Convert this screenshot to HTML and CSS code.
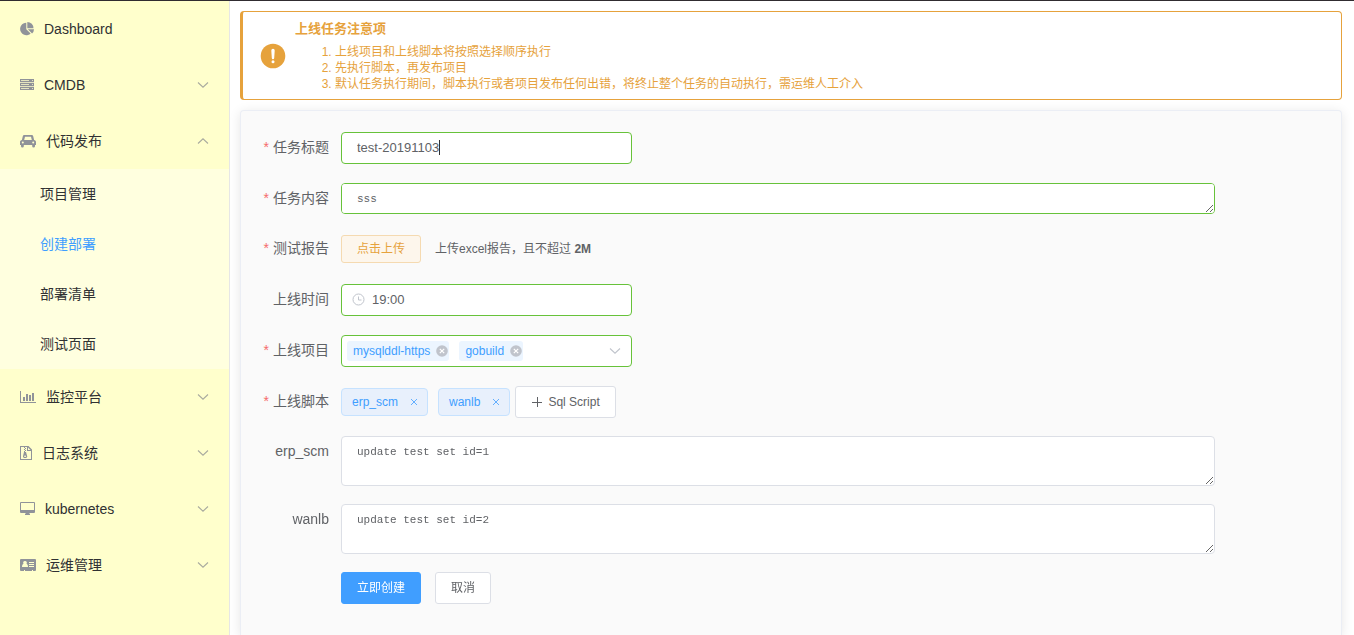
FILE: index.html
```
<!DOCTYPE html>
<html lang="zh-CN">
<head>
<meta charset="utf-8">
<title>创建部署</title>
<link rel="stylesheet" href="styles.css">
</head>
<body>
<svg class="sprite" aria-hidden="true">
  <symbol id="chevron" viewBox="0 0 12 12"><path d="M1 3.500 6 8.200l5-4.700" fill="none" stroke="currentColor" stroke-width="1.100"/></symbol>
  <symbol id="cross" viewBox="0 0 12 12"><path d="m3 3 6 6m0-6-6 6" fill="none" stroke="currentColor" stroke-width=".8"/></symbol>
  <symbol id="cross-circle" viewBox="0 0 12 12"><circle cx="6" cy="6" r="5.800" fill="#c0c4cc"/><path d="m3.800 3.800 4.400 4.400m0-4.400-4.400 4.400" fill="none" stroke="#fff" stroke-width="1.200"/></symbol>
</svg>
<div class="layout">
  <nav class="sidebar">
    <a class="menu-item" href="#">
      <svg class="menu-icon" width="14" height="14" viewBox="0 0 14 14"><path d="M6.300.8A6.200 6.200 0 1 0 10.600 11.500L6.300 7.200z"/><path d="M7.300 0v6.200h6.200A6.200 6.200 0 0 0 7.300 0z"/><path d="M7.800 7.200h6.200a6.200 6.200 0 0 1-1.900 4.300z"/></svg>
      <span>Dashboard</span>
    </a>
    <a class="menu-item" href="#">
      <svg class="menu-icon" width="14" height="14" viewBox="0 0 14 14"><path fill-rule="evenodd" d="M0 1h14v3H0zm1 1v1h8V2zm11 0v1h1V2zM0 5h14v3H0zm1 1v1h8V6zm11 0v1h1V6zM0 9h14v3H0zm1 1v1h8v-1zm11 0v1h1v-1z"/><path d="M0 1h14v11H0z" opacity=".25"/></svg>
      <span>CMDB</span>
      <svg class="menu-arrow"><use href="#chevron"/></svg>
    </a>
    <a class="menu-item" href="#">
      <svg class="menu-icon" width="16" height="14" viewBox="0 0 16 14"><path fill-rule="evenodd" d="M4.500 1h7c.9 0 1.500.5 1.700 1.200L14.100 6c1.200.2 1.900 1 1.900 2v3h-1v1.200a1.400 1.400 0 0 1-2.800 0V11H3.800v1.200a1.400 1.400 0 0 1-2.800 0V11H0V8c0-1 .7-1.800 1.900-2l.9-3.800C3 1.500 3.600 1 4.500 1zm.5 1.800L4.200 6h7.600L11 2.800zM2.800 7.500a1 1 0 1 0 0 2 1 1 0 0 0 0-2zm10.400 0a1 1 0 1 0 0 2 1 1 0 0 0 0-2z"/></svg>
      <span>代码发布</span>
      <svg class="menu-arrow menu-arrow--open"><use href="#chevron"/></svg>
    </a>
    <div class="submenu">
      <a class="submenu-item" href="#">项目管理</a>
      <a class="submenu-item submenu-item--active" href="#">创建部署</a>
      <a class="submenu-item" href="#">部署清单</a>
      <a class="submenu-item" href="#">测试页面</a>
    </div>
    <a class="menu-item" href="#">
      <svg class="menu-icon" width="16" height="14" viewBox="0 0 16 14"><path d="M0 1h1v11h15v1H0zM3 7h2v4H3zM6 4h2v7H6zM9 5h2v6H9zM12 3h2v8h-2z"/></svg>
      <span>监控平台</span>
      <svg class="menu-arrow"><use href="#chevron"/></svg>
    </a>
    <a class="menu-item" href="#">
      <svg class="menu-icon" width="12" height="14" viewBox="0 0 12 14"><path fill-rule="evenodd" d="M0 0h8.500L12 3.500V14H0zm1 1v12h10V5H7V1zm7 .5V4h2.500z"/><path d="M4 1h1v1H4zM5 2h1v1H5zM4 3h1v1H4zM5 4h1v1H5zM4 5h1v1H4z"/><path fill-rule="evenodd" d="M4 6h2l1.200 4.200c.3 1.100-.8 1.800-2.100 1.800S2.700 11.300 3 10.200zm1.100 3.500c-.7 0-1.100.3-1.100.7s.4.700 1.100.7 1.100-.3 1.100-.7-.4-.7-1.100-.7z"/></svg>
      <span>日志系统</span>
      <svg class="menu-arrow"><use href="#chevron"/></svg>
    </a>
    <a class="menu-item" href="#">
      <svg class="menu-icon" width="15" height="14" viewBox="0 0 15 14"><path fill-rule="evenodd" d="M1 0h13q1 0 1 1v9q0 1-1 1H9.500v1H10v1H5v-1h.5v-1H1q-1 0-1-1V1q0-1 1-1zm0 1v7h13V1z"/></svg>
      <span>kubernetes</span>
      <svg class="menu-arrow"><use href="#chevron"/></svg>
    </a>
    <a class="menu-item" href="#">
      <svg class="menu-icon" width="16" height="14" viewBox="0 0 16 14"><path fill-rule="evenodd" d="M1 1h14q1 0 1 1v10q0 1-1 1h-2v-1h-1v1H5v-1H4v1H1q-1 0-1-1V2q0-1 1-1zm4 2a1.700 1.700 0 0 0-1.500 2.700C2.400 6.200 2 7.500 2 9h6c0-1.500-.4-2.800-1.500-3.300A1.700 1.700 0 0 0 5 3zm4 1v1h5V4zm0 2v1h5V6zm0 2v1h5V8z"/></svg>
      <span>运维管理</span>
      <svg class="menu-arrow"><use href="#chevron"/></svg>
    </a>
  </nav>

  <main class="main">
    <section class="alert" role="alert">
      <svg class="alert-icon" viewBox="0 0 28 28"><circle cx="14" cy="14" r="12.300" fill="#e6a23c"/><path d="M12.300 8.500a1.700 1.700 0 0 1 3.400 0l-.5 7.500a1.200 1.200 0 0 1-2.400 0z" fill="#fff"/><circle cx="14" cy="19.800" r="1.500" fill="#fff"/></svg>
      <div class="alert-body">
        <h2 class="alert-title">上线任务注意项</h2>
        <ol class="alert-list">
          <li>上线项目和上线脚本将按照选择顺序执行</li>
          <li>先执行脚本，再发布项目</li>
          <li>默认任务执行期间，脚本执行或者项目发布任何出错，将终止整个任务的自动执行，需运维人工介入</li>
        </ol>
      </div>
    </section>

    <form class="card">
      <div class="row">
        <label class="label required" for="title">任务标题</label>
        <div class="control">
          <div class="field">
            <input class="input valid" id="title" type="text" value="test-20191103">
            <span class="caret"></span>
          </div>
        </div>
      </div>
      <div class="row row--tight">
        <label class="label required" for="content">任务内容</label>
        <div class="control"><textarea class="textarea textarea--single valid" id="content">sss</textarea></div>
      </div>
      <div class="row">
        <label class="label required" for="upload">测试报告</label>
        <div class="control control--spaced">
          <button class="button button--upload" id="upload" type="button">点击上传</button>
          <span class="hint">上传excel报告，且不超过 <b>2M</b></span>
        </div>
      </div>
      <div class="row">
        <label class="label" for="time">上线时间</label>
        <div class="control">
          <div class="field">
            <input class="input input--icon valid" id="time" type="text" value="19:00">
            <svg class="clock" viewBox="0 0 14 14"><path d="M6.500 3.500V7h3" fill="none" stroke="currentColor"/><circle cx="6.500" cy="6.500" r="5.500" fill="none" stroke="currentColor"/></svg>
          </div>
        </div>
      </div>
      <div class="row">
        <label class="label required" for="projects">上线项目</label>
        <div class="control">
          <div class="field select valid">
            <span class="chip">mysqlddl-https<button class="chip-close" type="button" aria-label="移除 mysqlddl-https"><svg class="glyph"><use href="#cross-circle"/></svg></button></span>
            <span class="chip">gobuild<button class="chip-close" type="button" aria-label="移除 gobuild"><svg class="glyph"><use href="#cross-circle"/></svg></button></span>
            <input class="select-input" id="projects" type="text" role="combobox" aria-expanded="false">
            <svg class="glyph select-arrow"><use href="#chevron"/></svg>
          </div>
        </div>
      </div>
      <div class="row row--tight">
        <label class="label required" for="add-script">上线脚本</label>
        <div class="control">
          <span class="tag">erp_scm<button class="tag-close" type="button" aria-label="移除 erp_scm"><svg class="glyph"><use href="#cross"/></svg></button></span>
          <span class="tag tag--last">wanlb<button class="tag-close" type="button" aria-label="移除 wanlb"><svg class="glyph"><use href="#cross"/></svg></button></span>
          <button class="button" id="add-script" type="button"><svg class="glyph" viewBox="0 0 12 12"><path d="M6.500 1v10M1 6.500h10" stroke="currentColor"/></svg>Sql Script</button>
        </div>
      </div>
      <div class="row">
        <label class="label" for="erp">erp_scm</label>
        <div class="control"><textarea class="textarea" id="erp">update test set id=1</textarea></div>
      </div>
      <div class="row">
        <label class="label" for="wanlb">wanlb</label>
        <div class="control"><textarea class="textarea" id="wanlb">update test set id=2</textarea></div>
      </div>
      <div class="row">
        <div class="label"></div>
        <div class="control control--spaced">
          <button class="button button--primary" type="submit">立即创建</button>
          <button class="button" type="button">取消</button>
        </div>
      </div>
    </form>
  </main>
</div>
</body>
</html>
```
FILE: styles.css
```
* {
  box-sizing: border-box;
}

body {
  margin: 0;
  background: #fff;
  color: #606266;
  font-family: "Liberation Sans", "Noto Sans CJK SC", sans-serif;
  font-size: 14px;
}

button,
input,
textarea {
  margin: 0;
  font-family: inherit;
  color: inherit;
  outline: none;
}

a {
  text-decoration: none;
}

.sprite {
  display: none;
}

.layout {
  display: flex;
  min-height: 100vh;
  border-top: 1px solid #302c30;
}

/* Sidebar */
.sidebar {
  flex: 0 0 230px;
  background: #ffffcc;
  border-right: 1px solid #e6e6e6;
}

.menu-item {
  display: flex;
  align-items: center;
  gap: 10px;
  height: 56px;
  padding: 0 20px;
  color: #303133;
  line-height: 20px;
}

.menu-icon {
  flex: none;
  fill: #909399;
}

.menu-arrow {
  width: 12px;
  height: 12px;
  margin-left: auto;
  color: #a9ab9f;
}

.menu-arrow--open {
  transform: rotate(180deg);
}

.submenu {
  background: #ffffdf;
}

.submenu-item {
  display: block;
  padding-left: 40px;
  line-height: 50px;
  color: #303133;
}

.submenu-item--active {
  color: #409eff;
}

/* Main column */
.main {
  flex: 1;
  min-width: 0;
  display: flex;
  flex-direction: column;
  gap: 10px;
  padding: 10px 12px 0 10px;
}

.alert {
  display: flex;
  align-items: center;
  gap: 8px;
  padding: 8px 16px 7px;
  border: 1px solid #e6a23c;
  border-left-width: 3px;
  border-radius: 4px;
  color: #e6a23c;
}

.alert-icon {
  flex: none;
  width: 28px;
  height: 28px;
}

.alert-title {
  margin: 0;
  font-size: 13px;
  line-height: 18px;
}

.alert-list {
  margin: 6px 0 0;
  padding-left: 40px;
  font-size: 12px;
  line-height: 16px;
}

.card {
  flex: 1;
  display: flex;
  flex-direction: column;
  gap: 18px;
  padding: 21px 20px;
  background: #fafafa;
  border: 1px solid #ebeef5;
  border-bottom: 0;
  border-radius: 4px 4px 0 0;
  box-shadow: 0 2px 12px rgba(0, 0, 0, 0.1);
}

/* Form rows */
.row {
  display: flex;
  align-items: flex-start;
  min-height: 33px;
}

.row--tight {
  min-height: 32px;
}

.label {
  flex: 0 0 80px;
  padding-right: 12px;
  line-height: 31px;
  text-align: right;
}

.required::before {
  content: "*";
  margin-right: 4px;
  color: #f56c6c;
}

.control {
  flex: 1;
  display: flex;
  align-items: center;
  margin-right: 106px;
}

.control--spaced {
  min-height: 32px;
  gap: 14px;
}

.field {
  position: relative;
  width: calc(100% / 3);
}

.input,
.textarea,
.select {
  background: #fff;
  border: 1px solid #dcdfe6;
  border-radius: 4px;
}

.input {
  display: block;
  width: 100%;
  height: 32px;
  padding: 0 15px 2px;
  font-size: 13px;
}

.input--icon {
  padding-left: 30px;
}

.textarea {
  display: block;
  width: 100%;
  height: 50px;
  padding: 5px 15px;
  font-family: "Liberation Mono", monospace;
  font-size: 11px;
  line-height: 20px;
  resize: vertical;
}

.textarea--single {
  height: 31px;
}

.input.valid,
.textarea.valid,
.select.valid {
  border-color: #67c23a;
}

.caret {
  position: absolute;
  top: 8px;
  left: 98px;
  width: 1px;
  height: 15px;
  background: #303133;
}

.clock {
  position: absolute;
  top: 9px;
  left: 11px;
  width: 14px;
  height: 14px;
  color: #c0c4cc;
}

.glyph {
  display: block;
  width: 12px;
  height: 12px;
}

.hint {
  font-size: 12px;
  line-height: 16px;
}

/* Multiple select */
.select {
  display: flex;
  align-items: center;
  gap: 10px;
  height: 32px;
  padding: 0 10px 0 5px;
}

.chip {
  display: flex;
  align-items: center;
  gap: 6px;
  height: 20px;
  padding: 0 1px 0 6px;
  background: #ecf5ff;
  border-radius: 3px;
  color: #409eff;
  font-size: 12px;
}

.chip-close,
.tag-close {
  padding: 0;
  border: 0;
  background: none;
}

.select-input {
  flex: 1;
  min-width: 0;
  padding: 0;
  border: 0;
  background: none;
}

.select-arrow {
  color: #c0c4cc;
}

/* Tags */
.tag {
  display: flex;
  align-items: center;
  gap: 10px;
  height: 28px;
  margin-right: 10px;
  padding: 0 7px 0 10px;
  background: #e8f0fc;
  border: 1px solid #c6e2ff;
  border-radius: 4px;
  color: #409eff;
  font-size: 12px;
}

.tag--last {
  margin-right: 5px;
}

/* Buttons */
.button {
  display: flex;
  align-items: center;
  gap: 5px;
  height: 32px;
  padding: 0 15px 1px;
  background: #fff;
  border: 1px solid #dcdfe6;
  border-radius: 3px;
  font-size: 12px;
  line-height: 16px;
}

.button--upload {
  height: 28px;
  background: #fdf6ec;
  border-color: #f5dab1;
  color: #e6a23c;
}

.button--primary {
  background: #409eff;
  border-color: #409eff;
  color: #fff;
}
```
